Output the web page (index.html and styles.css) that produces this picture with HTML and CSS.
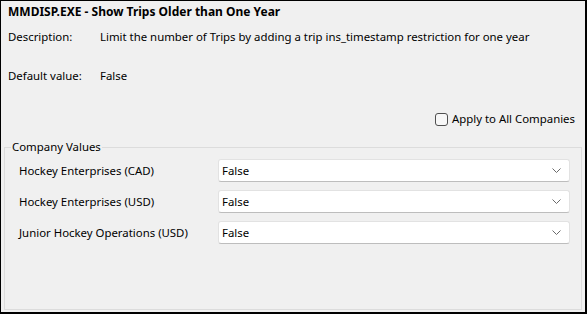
FILE: index.html
```html
<!DOCTYPE html>
<html lang="en">
<head>
  <meta charset="UTF-8" />
  <title>MMDISP.EXE - Show Trips Older than One Year</title>
  <link rel="stylesheet" href="styles.css">
</head>
<body>
  <div class="dialog">
    <!-- Option header -->
    <div class="title">MMDISP.EXE - Show Trips Older than One Year</div>
    <div class="info-row desc-row">
      <span class="info-label">Description:</span>
      <span class="info-value">Limit the number of Trips by adding a trip ins_timestamp restriction for one year</span>
    </div>
    <div class="info-row default-row">
      <span class="info-label">Default value:</span>
      <span class="info-value">False</span>
    </div>

    <div class="apply-row">
      <label class="check">
        <span class="check-box"></span>
        <span>Apply to All Companies</span>
      </label>
    </div>

    <!-- Per-company values -->
    <fieldset class="group">
      <legend>Company Values</legend>
      <div class="company-row">
        <span class="company-name">Hockey Enterprises (CAD)</span>
        <div class="combo">
          <span>False</span>
          <svg class="chevron" width="9" height="5" viewBox="0 0 9 5"><path d="M0.5 0.5 L4.5 4.5 L8.5 0.5" fill="none" stroke="#6a6a6a" stroke-width="1"/></svg>
        </div>
      </div>
      <div class="company-row">
        <span class="company-name">Hockey Enterprises (USD)</span>
        <div class="combo">
          <span>False</span>
          <svg class="chevron" width="9" height="5" viewBox="0 0 9 5"><path d="M0.5 0.5 L4.5 4.5 L8.5 0.5" fill="none" stroke="#6a6a6a" stroke-width="1"/></svg>
        </div>
      </div>
      <div class="company-row">
        <span class="company-name">Junior Hockey Operations (USD)</span>
        <div class="combo">
          <span>False</span>
          <svg class="chevron" width="9" height="5" viewBox="0 0 9 5"><path d="M0.5 0.5 L4.5 4.5 L8.5 0.5" fill="none" stroke="#6a6a6a" stroke-width="1"/></svg>
        </div>
      </div>
    </fieldset>
  </div>
</body>
</html>
```

FILE: styles.css
```css
* {
  margin: 0;
  padding: 0;
  box-sizing: border-box;
}
body {
  font-family: "Segoe UI", "Noto Sans", sans-serif;
  font-size: 11.4px;
  line-height: 16px;
  color: #000;
  background: #f0f0f0;
}

.dialog {
  width: 587px;
  height: 314px;
  display: flex;
  flex-direction: column;
  background: #f0f0f0;
  border-style: solid;
  border-color: #000;
  border-width: 1px 2px 2px 1px;
}

/* Header */
.title {
  font-size: 12px;
  font-weight: 700;
  margin: 3px 0 0 7px;
}
.info-row {
  display: flex;
  padding-left: 7px;
}
.desc-row { margin-top: 9px; }
.default-row { margin-top: 23px; }
.info-label { width: 92px; flex-shrink: 0; }

/* Checkbox */
.apply-row {
  display: flex;
  justify-content: flex-end;
  margin-top: 27px;
  padding-right: 10px;
}
.check {
  display: flex;
  align-items: center;
  gap: 4px;
}
.check-box {
  width: 13px;
  height: 13px;
  border: 1px solid #4f4f4f;
  border-radius: 3px;
  background: #f7f7f7;
}

/* Group box */
.group {
  flex: 1;
  margin: 12px 3px 2px 3px;
  border: 1px solid #dcdcdc;
  padding: 4px 11px 0 14px;
  display: flex;
  flex-direction: column;
  gap: 8px;
}
.group legend {
  margin-left: -8px;
  padding: 0 1px;
}
.company-row {
  display: flex;
  align-items: center;
  justify-content: space-between;
}
.combo {
  width: 352px;
  height: 23px;
  display: flex;
  align-items: center;
  justify-content: space-between;
  padding: 0 8px 0 3px;
  background: #fff;
  border: 1px solid #e2e2e2;
  border-bottom-color: #bdbdbd;
  border-radius: 3px;
}
.chevron { display: block; }
```
